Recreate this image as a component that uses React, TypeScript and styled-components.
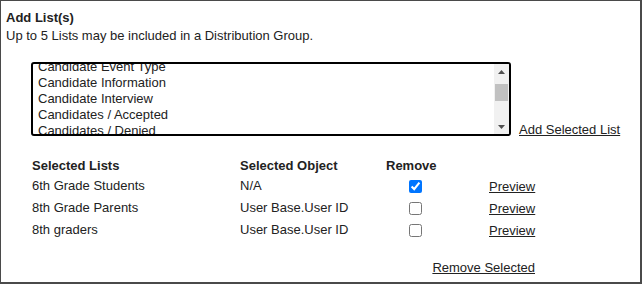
import React, { useEffect, useRef } from "react";
import styled, { createGlobalStyle } from "styled-components";

const Global = createGlobalStyle`
  html, body { margin: 0; padding: 0; background: #fff; }
  body { font-family: "Liberation Sans", Arial, sans-serif; font-size: 13px; color: #222; }
`;

const Frame = styled.div`
  box-sizing: border-box;
  width: 642px;
  height: 284px;
  border-style: solid;
  border-color: #4a4a4a;
  border-width: 1px 2px 2px 1px;
  padding: 9px 0 0 5px;
  display: flex;
  flex-direction: column;
`;

const Title = styled.div`
  font-weight: bold;
  font-size: 13px;
  line-height: 15px;
`;

const Note = styled.div`
  font-size: 13px;
  line-height: 15px;
  margin-top: 3px;
`;

const PickerRow = styled.div`
  display: flex;
  align-items: flex-end;
  margin-top: 19px;
  margin-left: 25px;
  gap: 8px;
`;

const ListFrame = styled.div`
  box-sizing: border-box;
  width: 480px;
  height: 74px;
  border: 2px solid #000;
  border-radius: 3px;
  display: flex;
  overflow: hidden;
  background: #fff;
`;

const ListBox = styled.select`
  flex: 1;
  height: 100%;
  border: none;
  padding: 0 0 0 3px;
  margin: 0;
  font-family: "Liberation Sans", Arial, sans-serif;
  font-size: 13px;
  color: #222;
  outline: none;
  background: #fff;
  overflow: hidden;
  scrollbar-width: none;
  &::-webkit-scrollbar { display: none; }
`;

const Item = styled.option`
  padding: 0 2px;
  line-height: 16px;
  height: 16px;
  min-height: 16px;
`;

const ScrollBar = styled.div`
  width: 15px;
  background: #f1f1f1;
  display: flex;
  flex-direction: column;
`;

const ArrowButton = styled.div`
  height: 15px;
  display: flex;
  align-items: center;
  justify-content: center;
`;

const Track = styled.div`
  flex: 1;
  display: flex;
  flex-direction: column;
`;

const Thumb = styled.div<{ $top: number; $size: number }>`
  margin: ${(p) => p.$top}px 1px 0 1px;
  height: ${(p) => p.$size}px;
  background: #c1c1c1;
`;

const Link = styled.a`
  color: #222;
  text-decoration: underline;
  font-size: 13px;
  line-height: 15px;
  cursor: pointer;
`;

const AddLink = styled(Link)`
  margin-bottom: -1px;
`;

const Table = styled.div`
  display: grid;
  grid-template-columns: 208px 146px 103px 46px;
  margin-left: 26px;
  margin-top: 21px;
`;

const Head = styled.div`
  font-weight: bold;
  line-height: 18px;
  height: 18px;
`;

const Cell = styled.div`
  line-height: 22px;
  height: 22px;
  display: flex;
  align-items: center;
`;

const Check = styled.input`
  width: 13px;
  height: 13px;
  margin: 0 0 0 23px;
`;

const Footer = styled.div`
  display: flex;
  justify-content: flex-end;
  width: 503px;
  margin-left: 26px;
  margin-top: 19px;
`;

const items = [
  "Bus Riders",
  "Candidate Event Type",
  "Candidate Information",
  "Candidate Interview",
  "Candidates / Accepted",
  "Candidates / Denied",
  "Candidates / Pending",
  "Class of 2025",
  "Faculty",
  "Parents",
  "Staff",
];

const rows = [
  { name: "6th Grade Students", obj: "N/A", checked: true },
  { name: "8th Grade Parents", obj: "User Base.User ID", checked: false },
  { name: "8th graders", obj: "User Base.User ID", checked: false },
];

const Arrow = ({ down }: { down?: boolean }) => (
  <svg width="7" height="4" viewBox="0 0 7 4">
    <path d={down ? "M0 0H7L3.5 4Z" : "M0 4H7L3.5 0Z"} fill="#505050" />
  </svg>
);

export default function App() {
  const ref = useRef<HTMLSelectElement>(null);
  useEffect(() => {
    if (ref.current) ref.current.scrollTop = 21;
  }, []);
  return (
    <>
      <Global />
      <Frame>
        <Title>Add List(s)</Title>
        <Note>Up to 5 Lists may be included in a Distribution Group.</Note>
        <PickerRow>
          <ListFrame>
            <ListBox ref={ref} multiple size={5}>
              {items.map((i) => (
                <Item key={i}>{i}</Item>
              ))}
            </ListBox>
            <ScrollBar>
              <ArrowButton>
                <Arrow />
              </ArrowButton>
              <Track>
                <Thumb $top={5} $size={17} />
              </Track>
              <ArrowButton>
                <Arrow down />
              </ArrowButton>
            </ScrollBar>
          </ListFrame>
          <AddLink>Add Selected List</AddLink>
        </PickerRow>
        <Table>
          <Head>Selected Lists</Head>
          <Head>Selected Object</Head>
          <Head>Remove</Head>
          <Head />
          {rows.map((r) => (
            <React.Fragment key={r.name}>
              <Cell>{r.name}</Cell>
              <Cell>{r.obj}</Cell>
              <Cell>
                <Check type="checkbox" defaultChecked={r.checked} />
              </Cell>
              <Cell>
                <Link>Preview</Link>
              </Cell>
            </React.Fragment>
          ))}
        </Table>
        <Footer>
          <Link>Remove Selected</Link>
        </Footer>
      </Frame>
    </>
  );
}
